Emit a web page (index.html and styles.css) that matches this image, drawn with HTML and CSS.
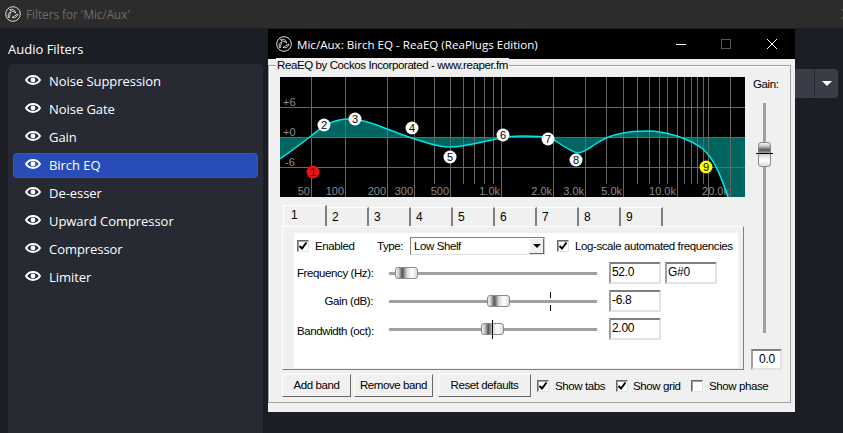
FILE: index.html
```html
<!DOCTYPE html>
<html lang="en">
<head>
    <meta charset="UTF-8">
    <title>Filters for 'Mic/Aux'</title>
    <link rel="stylesheet" href="styles.css">
</head>
<body>
    <header class="obs-title">
        <svg class="obs-logo" viewBox="0 0 16 16"><use href="#logo"/></svg>
        <span class="obs-title-text">Filters for 'Mic/Aux'</span>
        <svg class="obs-close" viewBox="0 0 8 12"><path d="M1 1l6 5-6 5"/></svg>
    </header>

    <main class="obs-main">
        <section class="sidebar">
            <h2 class="sidebar-title">Audio Filters</h2>
            <ul class="filter-list">
                <li class="filter"><svg class="eye" viewBox="0 0 16 12"><use href="#eye"/></svg>Noise Suppression</li>
                <li class="filter"><svg class="eye" viewBox="0 0 16 12"><use href="#eye"/></svg>Noise Gate</li>
                <li class="filter"><svg class="eye" viewBox="0 0 16 12"><use href="#eye"/></svg>Gain</li>
                <li class="filter selected"><svg class="eye" viewBox="0 0 16 12"><use href="#eye"/></svg>Birch EQ</li>
                <li class="filter"><svg class="eye" viewBox="0 0 16 12"><use href="#eye"/></svg>De-esser</li>
                <li class="filter"><svg class="eye" viewBox="0 0 16 12"><use href="#eye"/></svg>Upward Compressor</li>
                <li class="filter"><svg class="eye" viewBox="0 0 16 12"><use href="#eye"/></svg>Compressor</li>
                <li class="filter"><svg class="eye" viewBox="0 0 16 12"><use href="#eye"/></svg>Limiter</li>
            </ul>
        </section>
        <section class="content">
            <div class="obs-combo"><span class="obs-combo-btn"><i class="obs-arrow"></i></span></div>
        </section>
    </main>

    <!-- ReaEQ plugin window, floats over the OBS dialog -->
    <div class="window">
        <div class="win-title">
            <svg class="win-logo" viewBox="0 0 16 16"><use href="#logo"/></svg>
            <span class="win-title-text">Mic/Aux: Birch EQ - ReaEQ (ReaPlugs Edition)</span>
            <svg class="win-btns" viewBox="0 0 101 10">
                <path class="btn-min" d="M0 5.5h10"/>
                <rect class="btn-max" x="45.5" y="0.5" width="9" height="9"/>
                <path class="btn-x" d="M91 0l10 10M101 0l-10 10"/>
            </svg>
        </div>

        <div class="group">
            <span class="group-label">ReaEQ by Cockos Incorporated - www.reaper.fm</span>
            <div class="group-left">
                <svg class="graph" width="465" height="120" viewBox="280 77 465 120">
                    <rect x="280" y="77" width="465" height="120" fill="#000"/>
                    <path class="curve-fill" d="M280 137L280 159C290 152 302 143 311 136C318 130 323 126 330 123C337 120 343 119 349 119C358 119 373 123 387 129C398 133 408 137 418 140C428 143 438 147 450 147C465 147 480 142 501 138C510 136 516 136 523 136C532 136 542 136 551 138C558 142 566 149 577 153C583 153 588 149 594 145C601 140 611 135 623 133C632 131 640 131 648 131C658 131 667 133 677 136C686 139 695 143 703 149C712 157 718 169 723 183L728 197L745 197L745 137Z"/>
                    <path class="grid-line" d="M280 107.5h465M280 137.5h465M280 167.5h465M311.5 77v120M345.5 77v120M387.5 77v120M414.5 77v120M450.5 77v120M501.5 77v120M553.5 77v120M585.5 77v120M623.5 77v120M677.5 77v120M708.5 77v120M730.5 77v120"/>
                    <path class="grid-line" d="M434.5 77v107M463.5 77v107M474.5 77v107M484.5 77v107M493.5 77v107M606.5 77v107M637.5 77v107M649.5 77v107M659.5 77v107M667.5 77v107M684.5 77v107M691.5 77v107M697.5 77v107M703.5 77v107"/>
                    <g class="graph-text">
                        <text x="283" y="106">+6</text>
                        <text x="283" y="136">+0</text>
                        <text x="285" y="166">-6</text>
                    </g>
                    <g class="graph-text freq">
                        <text x="310" y="195">50</text>
                        <text x="344" y="195">100</text>
                        <text x="386" y="195">200</text>
                        <text x="413" y="195">300</text>
                        <text x="449" y="195">500</text>
                        <text x="500" y="195">1.0k</text>
                        <text x="552" y="195">2.0k</text>
                        <text x="584" y="195">3.0k</text>
                        <text x="622" y="195">5.0k</text>
                        <text x="676" y="195">10.0k</text>
                        <text x="729" y="195">20.0k</text>
                    </g>
                    <path class="curve" d="M280 159C290 152 302 143 311 136C318 130 323 126 330 123C337 120 343 119 349 119C358 119 373 123 387 129C398 133 408 137 418 140C428 143 438 147 450 147C465 147 480 142 501 138C510 136 516 136 523 136C532 136 542 136 551 138C558 142 566 149 577 153C583 153 588 149 594 145C601 140 611 135 623 133C632 131 640 131 648 131C658 131 667 133 677 136C686 139 695 143 703 149C712 157 718 169 723 183L728 197"/>
                    <g class="node red"><circle cx="313" cy="172" r="6.5"/><text x="313" y="176">1</text></g>
                    <g class="node"><circle cx="324" cy="125" r="6.5"/><text x="324" y="129">2</text></g>
                    <g class="node"><circle cx="355" cy="119" r="6.5"/><text x="355" y="123">3</text></g>
                    <g class="node"><circle cx="412" cy="128" r="6.5"/><text x="412" y="132">4</text></g>
                    <g class="node"><circle cx="450" cy="157" r="6.5"/><text x="450" y="161">5</text></g>
                    <g class="node"><circle cx="503" cy="135" r="6.5"/><text x="503" y="139">6</text></g>
                    <g class="node"><circle cx="548" cy="139" r="6.5"/><text x="548" y="143">7</text></g>
                    <g class="node"><circle cx="576" cy="160" r="6.5"/><text x="576" y="164">8</text></g>
                    <g class="node yellow"><circle cx="706" cy="167" r="6.5"/><text x="706" y="171">9</text></g>
                </svg>

                <div class="tabs">
                    <span class="tab active">1</span>
                    <span class="tab">2</span>
                    <span class="tab">3</span>
                    <span class="tab">4</span>
                    <span class="tab">5</span>
                    <span class="tab">6</span>
                    <span class="tab">7</span>
                    <span class="tab">8</span>
                    <span class="tab">9</span>
                </div>

                <div class="tab-panel">
                    <div class="tab-inner">
                        <div class="band-top">
                            <span class="check on"><svg viewBox="0 0 10 10"><path d="M1.5 5l2.5 2.5 4.5-6"/></svg></span>
                            <span class="enabled-label">Enabled</span>
                            <span class="type-label">Type:</span>
                            <span class="select">Low Shelf<span class="select-btn"><i class="select-arrow"></i></span></span>
                            <span class="check on log-check"><svg viewBox="0 0 10 10"><path d="M1.5 5l2.5 2.5 4.5-6"/></svg></span>
                            <span class="log-label">Log-scale automated frequencies</span>
                        </div>
                        <div class="band-grid">
                            <label class="band-label">Frequency (Hz):</label>
                            <div class="slider"><span class="thumb" style="left:6px"></span></div>
                            <span class="edit">52.0</span>
                            <span class="edit note">G#0</span>

                            <label class="band-label">Gain (dB):</label>
                            <div class="slider"><span class="tick gap" style="left:161px"></span><span class="thumb" style="left:98px"></span></div>
                            <span class="edit">-6.8</span>
                            <span></span>

                            <label class="band-label low">Bandwidth (oct):</label>
                            <div class="slider"><span class="thumb" style="left:92px"></span><span class="tick" style="left:103px"></span></div>
                            <span class="edit">2.00</span>
                            <span></span>
                        </div>
                    </div>
                </div>

                <div class="win-bottom">
                    <span class="btn add-btn">Add band</span>
                    <span class="btn remove-btn">Remove band</span>
                    <span class="btn reset-btn">Reset defaults</span>
                    <span class="check on tabs-check"><svg viewBox="0 0 10 10"><path d="M1.5 5l2.5 2.5 4.5-6"/></svg></span>
                    <span class="opt-label tabs-label">Show tabs</span>
                    <span class="check on"><svg viewBox="0 0 10 10"><path d="M1.5 5l2.5 2.5 4.5-6"/></svg></span>
                    <span class="opt-label grid-label">Show grid</span>
                    <span class="check"></span>
                    <span class="opt-label">Show phase</span>
                </div>
            </div>

            <div class="gain-col">
                <span class="gain-label">Gain:</span>
                <div class="vslider"><span class="vthumb"></span><span class="vtick"></span></div>
                <span class="edit gain-edit">0.0</span>
            </div>
        </div>
    </div>

    <svg class="defs" width="0" height="0">
        <defs>
            <g id="logo" fill="none" stroke="currentColor" stroke-width="1">
                <circle cx="8" cy="8" r="7.300"/>
                <path d="M4.500 3.700C7.500 2.600 10.500 4 10.500 7C9.500 5.500 6.800 5.500 4.500 3.700Z"/>
                <path d="M12.800 8C12.500 11 9.500 12.600 7 11.300C8.800 11 10.500 9 12.800 8Z"/>
                <path d="M4 12C2.300 9.700 3.300 6.500 6 5.900C4.800 7.500 5 10 4 12Z"/>
            </g>
            <g id="eye">
                <path d="M1 6C4.500 .8 11.500 .8 15 6C11.500 11.200 4.500 11.200 1 6Z" fill="none" stroke="#fff" stroke-width="2"/>
                <circle cx="8" cy="6" r="2.400" fill="#fff"/>
            </g>
        </defs>
    </svg>
</body>
</html>
```

FILE: styles.css
```css
* {
    box-sizing: border-box;
}
body {
    margin: 0;
    width: 843px;
    height: 433px;
    overflow: hidden;
    display: flex;
    flex-direction: column;
    background-color: #1b1e25;
    font-family: "Open Sans", sans-serif;
    color: #fff;
}
.defs {
    position: absolute;
}

/* OBS dialog behind the plugin */
.obs-title {
    flex: none;
    height: 28px;
    display: flex;
    align-items: center;
    background-color: #2c2c2c;
    padding-left: 5px;
    color: #6e6e6e;
    font-size: 11.7px;
}
.obs-logo {
    width: 16px;
    height: 16px;
    color: #ddd;
    margin-right: 5px;
}
.obs-close {
    width: 8px;
    height: 12px;
    margin-left: auto;
    margin-right: -5px;
    fill: none;
    stroke: #666;
}
.obs-main {
    flex: 1;
    display: flex;
    min-height: 0;
}
.sidebar {
    width: 263px;
    padding: 12px 0 0 8px;
    display: flex;
    flex-direction: column;
}
.sidebar-title {
    margin: 0;
    height: 24px;
    line-height: 18px;
    font-size: 13px;
    font-weight: 400;
}
.filter-list {
    flex: 1;
    list-style: none;
    margin: 0;
    padding: 3px 5px;
    background-color: #272a33;
    border-radius: 5px 5px 0 0;
    font-size: 13px;
    letter-spacing: -0.05px;
}
.filter {
    height: 28px;
    display: flex;
    align-items: center;
    padding-left: 11px;
    border-radius: 4px;
    border: 1px solid transparent;
}
.filter.selected {
    height: 25px;
    margin: 1.5px 0;
    background-color: #284cb8;
    border-color: #2f57c9;
}
.eye {
    width: 16px;
    height: 12px;
    margin-right: 8px;
    margin-top: -2px;
}
.content {
    flex: 1;
    display: flex;
    justify-content: flex-end;
    align-items: flex-start;
    padding: 41px 5px 0 0;
}
.obs-combo {
    width: 200px;
    height: 29px;
    background-color: #3a3d48;
    border-radius: 4px;
    display: flex;
    justify-content: flex-end;
}
.obs-combo-btn {
    width: 24px;
    border-left: 1px solid #24262d;
    margin: 1px 0;
    display: flex;
    align-items: center;
    justify-content: center;
}
.obs-arrow {
    border: 5px solid transparent;
    border-top: 5px solid #fff;
    border-bottom: 0;
}

/* ReaEQ window */
.window {
    position: absolute;
    left: 268px;
    top: 29px;
    width: 527px;
    height: 383px;
    background-color: #f0f0f0;
    font-family: "Liberation Sans", Arial, sans-serif;
    font-size: 11.5px;
    letter-spacing: -0.4px;
    color: #000;
}
.win-title {
    height: 30px;
    background-color: #000;
    color: #fff;
    display: flex;
    align-items: center;
    padding-left: 8px;
    font-family: "Open Sans", sans-serif;
    font-size: 11.6px;
    letter-spacing: 0;
}
.win-logo {
    width: 16px;
    height: 16px;
    margin-right: 5px;
    color: #ddd;
}
.win-btns {
    width: 101px;
    height: 10px;
    margin-left: auto;
    margin-right: 18px;
    fill: none;
}
.btn-min, .btn-x {
    stroke: #fff;
}
.btn-max {
    stroke: #555;
}
.group {
    position: relative;
    height: 338px;
    width: 523px;
    margin-top: 6px;
    border: 1px solid #a0a0a0;
    box-shadow: inset 1px 1px 0 #fff;
    padding: 11px 0 0 11px;
    display: flex;
}
.group-label {
    position: absolute;
    left: 7px;
    top: -8px;
    padding: 0 1px;
    line-height: 14px;
    background-color: #f0f0f0;
    white-space: nowrap;
}
.group-left {
    width: 465px;
    flex: none;
}
.graph {
    display: block;
}
.curve-fill {
    fill: #006460;
}
.grid-line {
    fill: none;
    stroke: #666;
    stroke-width: 1;
}
.curve {
    fill: none;
    stroke: #00e5e5;
    stroke-width: 1.5;
}
.graph-text {
    fill: #8c8c8c;
    font-size: 11px;
    letter-spacing: 0;
}
.graph-text.freq {
    text-anchor: end;
}
.node circle {
    fill: #fff;
}
.node text {
    fill: #000;
    font-size: 11px;
    letter-spacing: 0;
    text-anchor: middle;
}
.node.red circle {
    fill: #f01010;
}
.node.yellow circle {
    fill: #ffff00;
}

/* tabs */
.tabs {
    display: flex;
    margin: 8px 0 0 3px;
    height: 21px;
    align-items: flex-end;
    font-size: 12px;
}
.tab {
    width: 42px;
    height: 19px;
    padding: 2px 0 0 5px;
    border-top: 1px solid #fff;
    border-right: 2px solid #808080;
    line-height: 14px;
}
.tab.active {
    width: 44px;
    height: 21px;
    padding-left: 7px;
    border-left: 1px solid #fff;
}
.tab-panel {
    margin-left: 2px;
    width: 462px;
    height: 144px;
    padding: 6px 5px 1px 11px;
    border-right: 1px solid #808080;
    border-bottom: 1px solid #808080;
    border-left: 1px solid #fff;
    border-top: 1px solid #fff;
}
.tab-inner {
    height: 135px;
    background-color: #fff;
    padding: 4px 0 0 3px;
}
.band-top {
    display: flex;
    align-items: center;
    height: 18px;
    white-space: nowrap;
}
.check {
    flex: none;
    width: 12px;
    height: 12px;
    background-color: #fff;
    border: 1px solid;
    border-color: #696969 #e3e3e3 #e3e3e3 #696969;
    box-shadow: inset 1px 1px 0 #a0a0a0;
    display: flex;
}
.check svg {
    width: 10px;
    height: 10px;
    fill: none;
    stroke: #000;
    stroke-width: 2;
}
.enabled-label {
    flex: none;
    margin-left: 6px;
    width: 62px;
}
.type-label {
    flex: none;
    width: 33px;
}
.select {
    flex: none;
    position: relative;
    width: 135px;
    height: 18px;
    border: 1px solid;
    border-color: #808080 #c8c8c8 #e3e3e3 #808080;
    padding-left: 3px;
    line-height: 16px;
}
.select-btn {
    position: absolute;
    right: 0;
    top: 0;
    width: 15px;
    height: 16px;
    background-color: #f0f0f0;
    border: 1px solid;
    border-color: #fff #696969 #696969 #fff;
    display: flex;
    align-items: center;
    justify-content: center;
}
.select-arrow {
    border: 4px solid transparent;
    border-top: 4px solid #000;
    border-bottom: 0;
}
.log-check {
    margin-left: 12px;
}
.log-label {
    margin-left: 6px;
}
.band-grid {
    display: grid;
    grid-template-columns: 76px 224px 64px 56px;
    grid-auto-rows: 22px;
    row-gap: 6px;
    margin-top: 7px;
}
.band-label {
    text-align: right;
    white-space: nowrap;
    line-height: 22px;
}
.band-label.low {
    line-height: 26px;
}
.slider {
    position: relative;
    margin-left: 16px;
    width: 208px;
}
.slider::before {
    content: "";
    position: absolute;
    left: 0;
    right: 0;
    top: 10px;
    height: 3px;
    background-color: #a0a0a0;
}
.thumb {
    position: absolute;
    top: 5px;
    width: 23px;
    height: 12px;
    border: 1px solid #8a8a8a;
    border-radius: 3px;
    background: linear-gradient(90deg, #eee 0, #d0d0d0 12%, #555 30%, #d8d8d8 52%, #fff 75%, #ddd 100%);
}
.tick {
    position: absolute;
    top: 2px;
    width: 1px;
    height: 19px;
    background-color: #000;
}
.tick.gap {
    background: linear-gradient(180deg, #000 0, #000 6px, transparent 6px, transparent 13px, #000 13px);
}
.edit {
    display: block;
    height: 22px;
    margin-left: 12px;
    width: 52px;
    background-color: #fff;
    border: 2px solid;
    border-color: #808080 #e3e3e3 #e3e3e3 #a0a0a0;
    padding-left: 1px;
    line-height: 16px;
    font-size: 12px;
    letter-spacing: -0.3px;
}
.edit.note {
    margin-left: 4px;
}

/* bottom row */
.win-bottom {
    display: flex;
    align-items: center;
    margin: 4px 0 0 2px;
    height: 23px;
    white-space: nowrap;
}
.btn {
    flex: none;
    height: 23px;
    line-height: 21px;
    text-align: center;
    background-color: #f0f0f0;
    border: 1px solid;
    border-color: #fff #696969 #696969 #fff;
}
.add-btn {
    width: 69px;
}
.remove-btn {
    width: 79px;
    margin-left: 3px;
}
.reset-btn {
    width: 93px;
    margin-left: 5px;
}
.tabs-check {
    margin-left: 6px;
}
.opt-label {
    flex: none;
    margin-left: 6px;
}
.tabs-label {
    width: 55px;
    margin-right: 6px;
}
.grid-label {
    width: 58px;
    margin-left: 5px;
}

/* gain column */
.gain-col {
    flex: 1;
    position: relative;
    display: flex;
    flex-direction: column;
    padding-left: 6px;
}
.gain-label {
    margin-left: 2px;
    line-height: 14px;
}
.vslider {
    position: relative;
    width: 31px;
    height: 230px;
    margin-top: 12px;
}
.vslider::before {
    content: "";
    position: absolute;
    left: 12px;
    top: 0;
    bottom: 0;
    width: 3px;
    background-color: #a0a0a0;
}
.vthumb {
    position: absolute;
    left: 7px;
    top: 39px;
    width: 13px;
    height: 25px;
    border: 1px solid #8a8a8a;
    border-radius: 3px;
    background: linear-gradient(180deg, #eee 0, #d0d0d0 12%, #555 30%, #d8d8d8 52%, #fff 75%, #ddd 100%);
}
.vtick {
    position: absolute;
    left: 5px;
    top: 50px;
    width: 17px;
    height: 1px;
    background-color: #000;
}
.gain-edit {
    margin: 16px 0 0 0;
    width: 31px;
    height: 21px;
    text-align: center;
    line-height: 17px;
}
```
